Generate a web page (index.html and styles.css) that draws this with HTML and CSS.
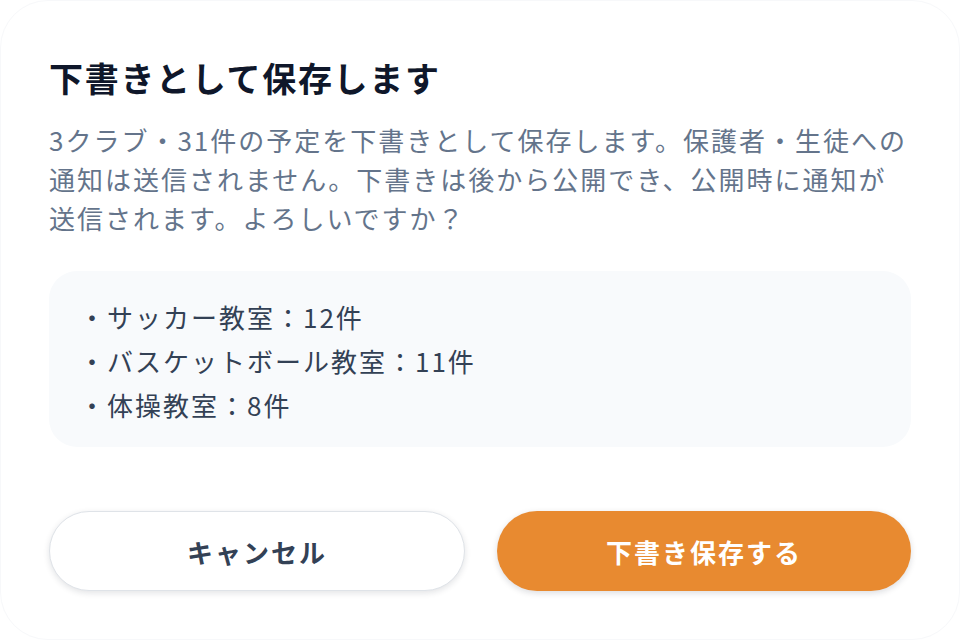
FILE: index.html
```html
<!DOCTYPE html>
<html lang="ja">

<head>
    <meta charset="UTF-8">
    <meta name="viewport" content="width=device-width, initial-scale=1.0">
    <title>下書き保存</title>
    <link rel="stylesheet" href="styles.css">
</head>

<body>
    <div class="dialog">
        <h1 class="dialog-title">下書きとして保存します</h1>
        <p class="dialog-text">3クラブ・31件の予定を下書きとして保存します。保護者・生徒への通知は送信されません。下書きは後から公開でき、公開時に通知が送信されます。よろしいですか？</p>

        <ul class="club-list">
            <li>・サッカー教室：12件</li>
            <li>・バスケットボール教室：11件</li>
            <li>・体操教室：8件</li>
        </ul>

        <div class="btn-row">
            <button class="btn btn-cancel">キャンセル</button>
            <button class="btn btn-save">下書き保存する</button>
        </div>
    </div>
</body>

</html>
```

FILE: styles.css
```css
* {
    box-sizing: border-box;
}

html,
body {
    margin: 0;
    padding: 0;
    background: #fff;
}

body {
    font-family: "Noto Sans CJK JP", "Noto Sans", sans-serif;
}

.dialog {
    width: 960px;
    height: 640px;
    padding: 52px 48px 48px;
    border: 1px solid #f7f8fa;
    border-radius: 48px;
    background: #fff;
    display: flex;
    flex-direction: column;
}

.dialog-title {
    margin: 0;
    font-size: 34px;
    line-height: 50px;
    font-weight: 700;
    letter-spacing: 0.05em;
    color: #0f172a;
}

.dialog-text {
    margin: 17px 0 0;
    font-size: 26px;
    line-height: 39px;
    letter-spacing: 2px;
    color: #64748b;
}

/* 内訳 */
.club-list {
    list-style: none;
    margin: 34px 0 0;
    padding: 24px 30px 20px;
    background: #f8fafc;
    border-radius: 28px;
}

.club-list li {
    font-size: 26px;
    line-height: 44px;
    letter-spacing: 2px;
    color: #334155;
}

.btn-row {
    margin-top: auto;
    display: flex;
    gap: 32px;
}

.btn {
    flex: 1;
    height: 80px;
    border-radius: 40px;
    font-family: inherit;
    font-size: 26px;
    font-weight: 700;
    letter-spacing: 2px;
    cursor: pointer;
}

.btn-cancel {
    background: #fff;
    color: #334155;
    border: 1px solid #dfe3e8;
    box-shadow: 0 2px 6px rgba(15, 23, 42, 0.12);
}

.btn-save {
    background: #e88a30;
    color: #fff;
    border: none;
    box-shadow: 0 2px 6px rgba(15, 23, 42, 0.15);
}
```
